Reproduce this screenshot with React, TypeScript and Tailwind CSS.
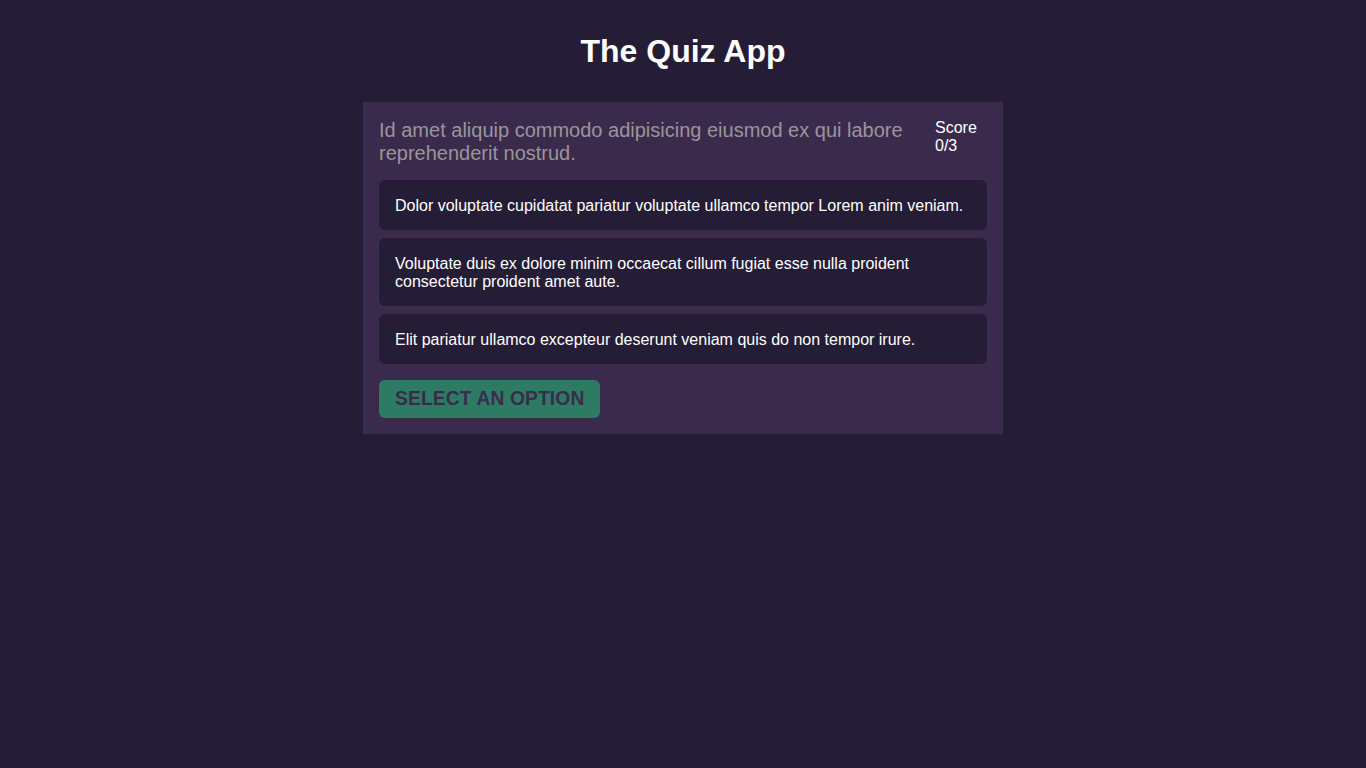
const options = [
  'Dolor voluptate cupidatat pariatur voluptate ullamco tempor Lorem anim veniam.',
  'Voluptate duis ex dolore minim occaecat cillum fugiat esse nulla proident consectetur proident amet aute.',
  'Elit pariatur ullamco excepteur deserunt veniam quis do non tempor irure.',
];

export default function App() {
  return (
    <div
      className="min-h-screen bg-[#251d35] text-white"
      style={{ fontFamily: '"Liberation Sans", Arial, sans-serif' }}
    >
      <h1 className="pt-[33px] pb-[32px] text-center text-[32px] leading-[37px] font-bold">
        The Quiz App
      </h1>

      <div className="mx-auto w-[640px] bg-[#3a2b4d] p-4">
        {/* Question + score */}
        <div className="flex gap-4">
          <p className="flex-1 pt-px text-[20px] leading-[23px] text-[#9c9499]">
            Id amet aliquip commodo adipisicing eiusmod ex qui labore reprehenderit nostrud.
          </p>
          <div className="w-[52px] pt-px text-base leading-[18px]">
            Score
            <br />
            0/3
          </div>
        </div>

        {/* Options */}
        <div className="mt-[15px] flex flex-col gap-2">
          {options.map((opt, i) => (
            <button
              key={i}
              className="rounded-md bg-[#251d35] px-4 pt-[17px] pb-[15px] text-left text-base leading-[18px] text-white"
            >
              {opt}
            </button>
          ))}
        </div>

        <button className="mt-4 h-[38px] rounded-md bg-[#2e7b64] px-4 pt-px text-[19.3px] tracking-[0.1px] font-bold uppercase text-[#3a2b4d]">
          Select an option
        </button>
      </div>
    </div>
  );
}
